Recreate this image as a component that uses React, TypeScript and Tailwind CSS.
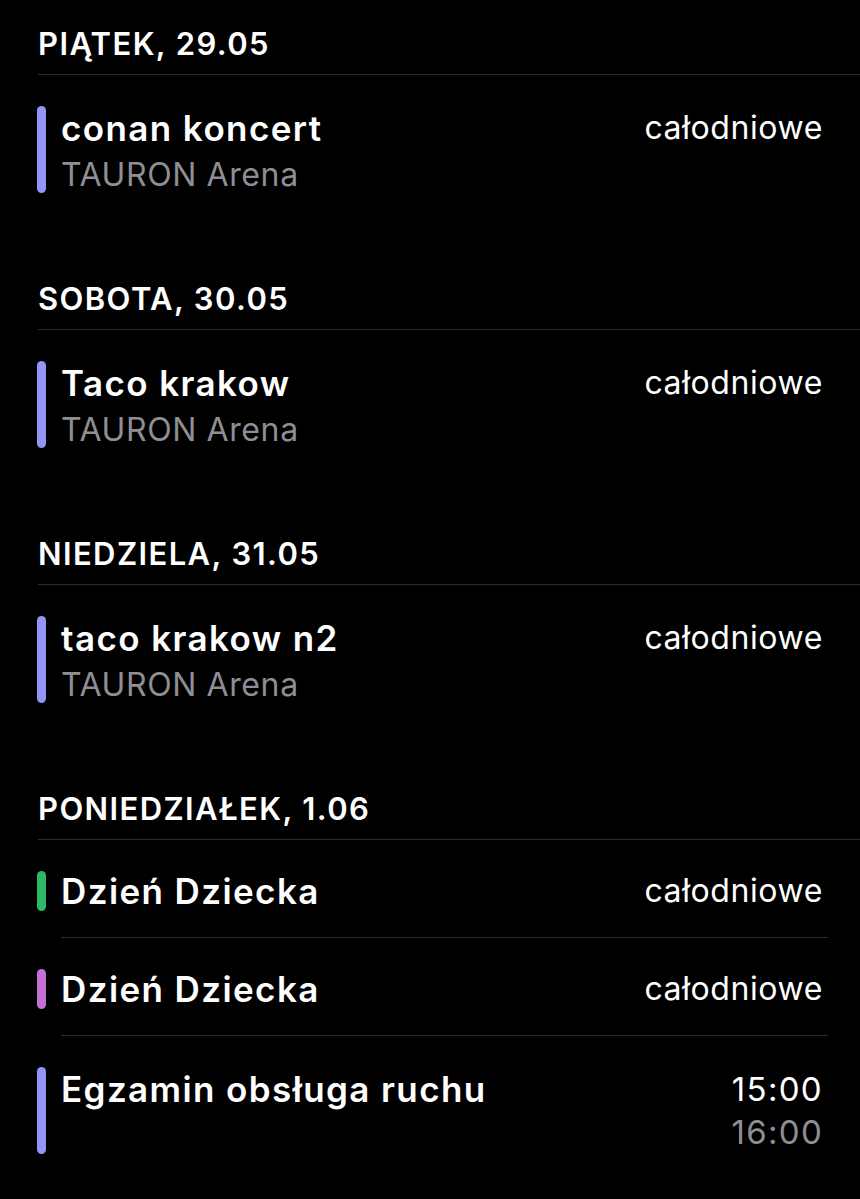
import React from "react";

type Event = {
  title: string;
  location?: string;
  color: string;
  start?: string;
  end?: string;
};

type Day = {
  label: string;
  events: Event[];
};

const days: Day[] = [
  {
    label: "PIĄTEK, 29.05",
    events: [{ title: "conan koncert", location: "TAURON Arena", color: "bg-[#9494f5]" }],
  },
  {
    label: "SOBOTA, 30.05",
    events: [{ title: "Taco krakow", location: "TAURON Arena", color: "bg-[#9494f5]" }],
  },
  {
    label: "NIEDZIELA, 31.05",
    events: [{ title: "taco krakow n2", location: "TAURON Arena", color: "bg-[#9494f5]" }],
  },
  {
    label: "PONIEDZIAŁEK, 1.06",
    events: [
      { title: "Dzień Dziecka", color: "bg-[#2fb866]" },
      { title: "Dzień Dziecka", color: "bg-[#c46fd6]" },
      { title: "Egzamin obsługa ruchu", color: "bg-[#9494f5]", start: "15:00", end: "16:00" },
    ],
  },
];

const EventRow = ({ event, last }: { event: Event; last: boolean }) => {
  const twoLines = !!event.location || !!event.end;
  return (
    <div className="flex pl-[37px]">
      <div className={`w-[9px] rounded-full mt-[31px] mb-[26px] ${event.color} ${twoLines ? "h-[87px]" : "h-[40px]"}`} />
      <div
        className={`flex flex-1 justify-between ml-[15px] pt-[31px] pb-[26px] mr-[32px] ${
          last ? "" : "border-b border-[#2c2c2e]"
        }`}
      >
        <div className="flex flex-col">
          <span
            className={`text-[35px] tracking-[1.4px] font-semibold text-white ${
              twoLines ? "leading-[44px]" : "leading-[40px]"
            }`}
          >
            {event.title}
          </span>
          {event.location && (
            <span className="text-[32px] tracking-[0.6px] leading-[37px] pt-[6px] text-[#8e8e93]">
              {event.location}
            </span>
          )}
        </div>
        <div className="flex flex-col items-end pr-[5px]">
          {event.start ? (
            <>
              <span className="text-[33px] tracking-[1.3px] leading-[44px] text-white">{event.start}</span>
              <span className="text-[33px] tracking-[1.3px] leading-[43px] text-[#8e8e93]">{event.end}</span>
            </>
          ) : (
            <span className={`text-[32px] tracking-[0.6px] text-white ${twoLines ? "leading-[44px]" : "leading-[40px]"}`}>
              całodniowe
            </span>
          )}
        </div>
      </div>
    </div>
  );
};

export default function App() {
  return (
    <div
      className="w-[860px] min-h-[1199px] bg-black text-white overflow-hidden"
      style={{ fontFamily: "Inter, 'Noto Sans', sans-serif" }}
    >
      {days.map((day, i) => (
        <section key={day.label} className={i > 0 ? "mt-[36px]" : ""}>
          <div className="ml-[38px] h-[75px] pt-[25px] border-b border-[#2c2c2e]">
            <h2 className="text-[31px] tracking-[1.4px] leading-[37px] font-semibold text-white">{day.label}</h2>
          </div>
          {day.events.map((ev, j) => (
            <EventRow key={j} event={ev} last={j === day.events.length - 1} />
          ))}
        </section>
      ))}
    </div>
  );
}
